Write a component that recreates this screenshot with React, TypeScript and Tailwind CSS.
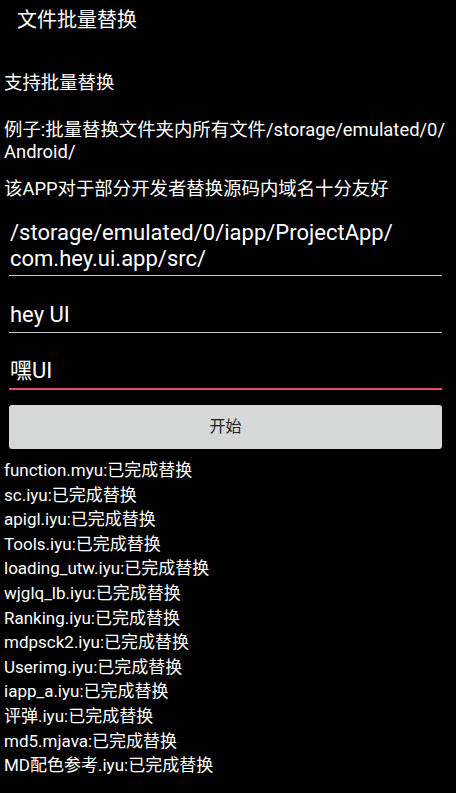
import React from 'react';

const results = [
  'function.myu',
  'sc.iyu',
  'apigl.iyu',
  'Tools.iyu',
  'loading_utw.iyu',
  'wjglq_lb.iyu',
  'Ranking.iyu',
  'mdpsck2.iyu',
  'Userimg.iyu',
  'iapp_a.iyu',
  '评弹.iyu',
  'md5.mjava',
  'MD配色参考.iyu',
];

const font = { fontFamily: 'Roboto, "Noto Sans CJK SC", sans-serif' };

export default function App() {
  return (
    <div className="w-[456px] h-[793px] bg-black text-white overflow-hidden" style={font}>
      {/* title bar */}
      <div className="h-[56px] pt-[6px] pl-[17px] text-[20px] leading-[28px]">文件批量替换</div>

      {/* description */}
      <div className="px-[4px] text-[18.4px] leading-[22px]">
        <p className="mt-[16px]">支持批量替换</p>
        <p className="mt-[25px]">
          例子:批量替换文件夹内所有文件/storage/emulated/0/
          <br />
          Android/
        </p>
        <p className="mt-[15px]">该APP对于部分开发者替换源码内域名十分友好</p>
      </div>

      {/* inputs */}
      <div className="pl-[9px] pr-[14px] mt-[20px]">
        <div className="border-b border-[#c8c8c8] text-[22px] leading-[26px] pb-[3px] pl-[1px]">
          /storage/emulated/0/iapp/ProjectApp/
          <br />
          com.hey.ui.app/src/
        </div>
        <div className="mt-[26px] border-b border-[#c8c8c8] text-[22px] leading-[26px] pb-[4px] pl-[1px]">
          hey UI
        </div>
        <div className="mt-[25px] border-b-2 border-[#e8457a] text-[22px] leading-[26px] pb-[4px] pl-[1px]">
          嘿UI
        </div>
        <button className="mt-[15px] w-full h-[44px] rounded-[3px] bg-[#d6d7d7] text-[#222] text-[16px] flex items-center justify-center">
          开始
        </button>
      </div>

      {/* results */}
      <div className="mt-[9px] px-[4px] text-[17px] leading-[24.6px]">
        {results.map((r) => (
          <div key={r}>{r}:已完成替换</div>
        ))}
      </div>
    </div>
  );
}
